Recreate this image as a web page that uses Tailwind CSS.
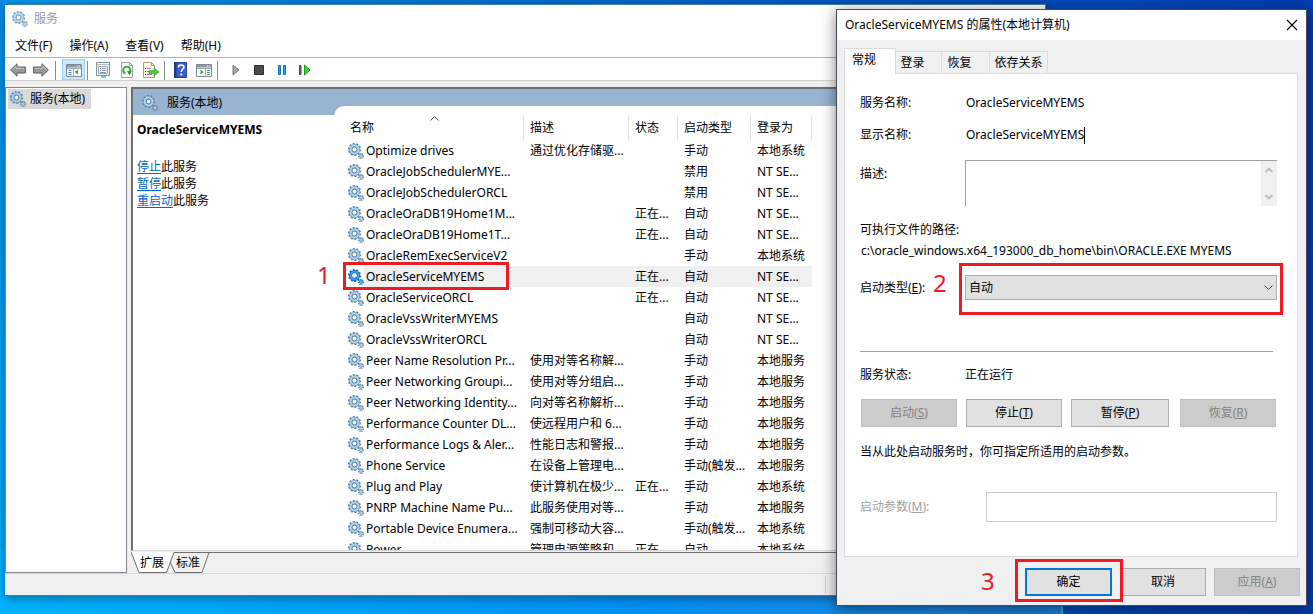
<!DOCTYPE html>
<html lang="zh-CN">
<head>
    <meta charset="UTF-8">
    <meta name="viewport" content="width=device-width, initial-scale=1.0">
    <title>服务</title>
    <script src="https://cdn.jsdelivr.net/npm/@tailwindcss/browser@4"></script>
</head>
<body class="relative h-screen overflow-hidden bg-linear-to-r from-[#0098ec] via-[#0560cc] via-55% to-[#043cb0] font-['Noto_Sans','Noto_Sans_CJK_SC',sans-serif] text-[12px] leading-5 text-black">

    <!-- Shared icons -->
    <svg class="hidden">
        <symbol id="gear" viewBox="0 0 16 16">
            <circle cx="6.5" cy="6.5" r="5.7" fill="none" stroke="#5d7f99" stroke-width="1.8" stroke-dasharray="1.9 1.6"/>
            <circle cx="6.5" cy="6.5" r="3.9" fill="none" stroke="#6795b8" stroke-width="3.2"/>
            <circle cx="6.5" cy="6.5" r="3.9" fill="none" stroke="#a9d3ec" stroke-width="2"/>
            <circle cx="6.5" cy="6.5" r="2.3" fill="#fff" stroke="#4f7896" stroke-width=".8"/>
            <circle cx="13" cy="13" r="2.3" fill="none" stroke="#5d7f99" stroke-width="1.4" stroke-dasharray="1.1 .7"/>
            <circle cx="13" cy="13" r="1.4" fill="#dcecf6" stroke="#7da3bf" stroke-width="1"/>
        </symbol>
        <symbol id="gear-selected" viewBox="0 0 16 16">
            <circle cx="6.5" cy="6.5" r="5.7" fill="none" stroke="#1b74bd" stroke-width="1.8" stroke-dasharray="1.9 1.6"/>
            <circle cx="6.5" cy="6.5" r="3.9" fill="none" stroke="#1674c4" stroke-width="3.2"/>
            <circle cx="6.5" cy="6.5" r="3.9" fill="none" stroke="#4aa3e4" stroke-width="1.4"/>
            <circle cx="6.5" cy="6.5" r="2.1" fill="#e6f3fc"/>
            <circle cx="13" cy="13" r="2.3" fill="none" stroke="#1b74bd" stroke-width="1.4" stroke-dasharray="1.1 .7"/>
            <circle cx="13" cy="13" r="1.4" fill="#a6d2f2" stroke="#2a80c6" stroke-width="1"/>
        </symbol>
    </svg>

    <!-- Wallpaper glow -->
    <div class="absolute inset-y-0 left-0 w-1.5 bg-linear-to-b from-[#0090e6] to-[#00aeff]"></div>
    <div class="absolute bottom-0 left-0 right-[250px] h-16 border-r-2 border-[#18b4e8] bg-linear-to-r from-[#00b2ff] via-[#0090f4] via-60% to-[#1c82dc]"></div>

    <!-- Services window -->
    <div class="absolute top-1 right-[267px] bottom-[18px] left-[5px] flex flex-col border border-l-0 border-[#3f7fa8] bg-[#f0f0f0] shadow-[0_2px_10px_rgba(0,0,0,0.4)]">
        <div class="flex h-[27px] items-center gap-1.5 bg-white pl-[7px] text-[#999999]">
            <svg class="size-4 opacity-80"><use href="#gear"/></svg>
            <h1>服务</h1>
        </div>
        <nav class="flex h-[26px] items-center gap-[17px] border-b border-[#b0b0b0] bg-white pt-0.5 pl-2.5">
            <button>文件(F)</button>
            <button>操作(A)</button>
            <button>查看(V)</button>
            <button>帮助(H)</button>
        </nav>

        <!-- Toolbar -->
        <div class="flex h-[23px] items-end border-b border-[#d0d0d0] bg-white pl-px">
            <button class="grid h-[21px] w-[23px] place-items-center" aria-label="后退">
                <svg class="size-4" viewBox="0 0 16 16"><path d="M.6 8 7 1.8V5h8.400v6H7v3.200z" fill="#989898" stroke="#5e5e5e"/><path d="M2.500 7.600 6 4.200V6.300h8.200" fill="none" stroke="#c6c6c6"/></svg>
            </button>
            <button class="grid h-[21px] w-[23px] place-items-center" aria-label="前进">
                <svg class="size-4" viewBox="0 0 16 16"><path d="M15.400 8 9 1.800V5H.600v6H9v3.200z" fill="#989898" stroke="#5e5e5e"/><path d="M13.500 7.600 10 4.200V6.300H1.800" fill="none" stroke="#c6c6c6"/></svg>
            </button>
            <span class="mr-1.5 ml-[3px] h-[19px] w-px bg-[#8c8c8c]"></span>
            <button class="grid h-[21px] w-[23px] place-items-center border border-[#99d1ff] bg-[#cce8ff]" aria-label="显示/隐藏控制台树">
                <svg class="size-4" viewBox="0 0 16 16"><path d="M.5 2.500h15v12H.500z" fill="#fff" stroke="#808b95"/><path d="M1 3h14v2.500H1z" fill="#8d98a3"/><path d="M11 4h1M13 4h1" stroke="#fff"/><path d="M1 6.500h14M7.500 6v8" stroke="#9aa5af"/><path d="M2.500 8.500h3M2.500 10.500h3M2.500 12.500h3" stroke="#4d82bd"/><path d="M12 7.500v5L8.900 10z" fill="#2fa52f"/></svg>
            </button>
            <span class="mr-[3px] ml-[2px] h-[19px] w-px bg-[#8c8c8c]"></span>
            <div class="flex gap-px">
                <button class="grid h-[21px] w-[23px] place-items-center" aria-label="属性">
                    <svg class="size-4" viewBox="0 0 16 16"><path d="M1.500.5h13v13h-13z" fill="#f4f6f8" stroke="#858e96"/><path d="M2 2.500h12" stroke="#b4bec6"/><path d="M3.500 4.500h9v7h-9z" fill="#fff" stroke="#9aa4ac"/><path d="M5 6.500h1M5 8.500h1" stroke="#3c86c8"/><path d="M7 6.500h4.500M7 8.500h4.500M5 10.500h6" stroke="#8e98a0"/><path d="M6 15h5" stroke="#46b5e8" stroke-width="1.500"/></svg>
                </button>
                <button class="grid h-[21px] w-[23px] place-items-center" aria-label="刷新">
                    <svg class="size-4" viewBox="0 0 16 16"><path d="M2.500.5h8l3 3v12h-11z" fill="#fbfbfb" stroke="#a3a3a3"/><path d="M10.500.5v3h3" fill="none" stroke="#a3a3a3"/><path d="M6.200 11.500A3.600 3.600 0 1 1 11 10" fill="none" stroke="#35ad35" stroke-width="2"/><path d="m8 9 5 .3-2.600 4z" fill="#239a23"/></svg>
                </button>
                <button class="grid h-[21px] w-[23px] place-items-center" aria-label="导出列表">
                    <svg class="size-4" viewBox="0 0 16 16"><path d="M.5.500h8l3 3v12H.500z" fill="#fff8dc" stroke="#a59f86"/><path d="M8.500.5v3h3" fill="none" stroke="#a59f86"/><path d="M2 6.500h1M2 9.500h1M2 12.500h1" stroke="#333"/><path d="M4 6.500h4M4 9.500h3M4 12.500h5" stroke="#7c8bab"/><path d="M6 8.500h5V6l5 4-5 4v-2.500H6z" fill="#55c63c" stroke="#3a9c27" stroke-width=".6"/></svg>
                </button>
            </div>
            <span class="mr-[3px] ml-[2px] h-[19px] w-px bg-[#8c8c8c]"></span>
            <div class="flex gap-px">
                <button class="grid h-[21px] w-[23px] place-items-center" aria-label="帮助">
                    <svg class="size-4" viewBox="0 0 16 16"><path d="M2.500.5h12v15h-12z" fill="#3a5ec8" stroke="#27419c"/><path d="M2 0h2.500v16H2z" fill="#203a8c"/><path d="M6.500 5.500C6.500 2.200 12.100 2.300 12 5.200 11.900 7.300 9.300 7.200 9.300 10" fill="none" stroke="#fff" stroke-width="1.600"/><circle cx="9.300" cy="12.500" r="1.100" fill="#fff"/></svg>
                </button>
                <button class="grid h-[21px] w-[23px] place-items-center" aria-label="显示/隐藏操作窗格">
                    <svg class="size-4" viewBox="0 0 16 16"><path d="M.5 2.500h15v12H.500z" fill="#fff" stroke="#808b95"/><path d="M1 3h14v2.500H1z" fill="#8d98a3"/><path d="M11 4h1M13 4h1" stroke="#fff"/><path d="M1 6.500h14M9.500 6v8" stroke="#9aa5af"/><path d="M11 8.500h3M11 10.500h3M11 12.500h3" stroke="#4d82bd"/><path d="M4.500 7.500v5L7.600 10z" fill="#2fa52f"/></svg>
                </button>
            </div>
            <span class="mr-1.5 ml-[2px] h-[19px] w-px bg-[#8c8c8c]"></span>
            <button class="grid h-[21px] w-[23px] place-items-center" aria-label="启动服务">
                <svg class="size-4" viewBox="0 0 16 16"><path d="M5 3v10l6-5z" fill="#a9a9a9" stroke="#757575"/></svg>
            </button>
            <button class="grid h-[21px] w-[23px] place-items-center" aria-label="停止服务">
                <svg class="size-4" viewBox="0 0 16 16"><path d="M3.500 3.500h9v9h-9z" fill="#4a4a4a" stroke="#303030"/></svg>
            </button>
            <button class="grid h-[21px] w-[23px] place-items-center" aria-label="暂停服务">
                <svg class="size-4" viewBox="0 0 16 16"><path d="M4.500 3.500h2v9h-2zM9.500 3.500h2v9h-2z" fill="#2ba1e4" stroke="#0f77bd"/></svg>
            </button>
            <button class="grid h-[21px] w-[23px] place-items-center" aria-label="重启动服务">
                <svg class="size-4" viewBox="0 0 16 16"><path d="M2.500 3.500h1.500v9H2.500z" fill="#777" stroke="#444"/><path d="M7.500 3v10l5.500-5z" fill="#3fd03f" stroke="#199c19"/></svg>
            </button>
        </div>

        <div class="mt-1.5 flex min-h-0 flex-1 gap-1">
            <!-- Console tree -->
            <aside class="w-[122px] shrink-0 border border-[#828790] bg-white p-0.5 pt-px">
                <div class="flex h-5 w-[83px] items-center gap-1 bg-[#d9d9d9] pl-0.5">
                    <svg class="size-4"><use href="#gear"/></svg>
                    <span>服务(本地)</span>
                </div>
            </aside>

            <main class="flex min-w-0 flex-1 flex-col">
                <div class="flex min-h-0 flex-1 overflow-hidden border-t-2 border-b border-l-2 border-t-[#6f6f6f] border-b-[#d8d8d8] border-l-[#6f6f6f] bg-white">
                    <section class="w-[201px] shrink-0">
                        <header class="flex h-[26px] items-center gap-[9px] bg-[#99b4d1] pt-0.5 pl-[9px]">
                            <svg class="size-4"><use href="#gear"/></svg>
                            <span>服务(本地)</span>
                        </header>
                        <div class="px-1 pt-[5px]">
                            <h2 class="font-bold">OracleServiceMYEMS</h2>
                            <div class="mt-[18px] leading-[17px]">
                                <p><a href="#stop" class="text-[#0066cc] underline underline-offset-2">停止</a>此服务</p>
                                <p><a href="#pause" class="text-[#0066cc] underline underline-offset-2">暂停</a>此服务</p>
                                <p><a href="#restart" class="text-[#0066cc] underline underline-offset-2">重启动</a>此服务</p>
                            </div>
                        </div>
                    </section>
                    <section class="flex-1 bg-[#99b4d1] pt-[17px]">
                        <div class="rounded-tl-[10px] bg-white pt-2.5 pl-2.5">
                            <table class="w-[468px] table-fixed border-collapse text-left whitespace-nowrap">
                                <thead>
                                    <tr class="h-6">
                                        <th class="relative w-[180px] p-0 pl-1.5 font-normal">名称
                                            <svg class="absolute top-0 left-[86px] h-[5px] w-[9px]" viewBox="0 0 9 5"><path d="m.5 4.500 4-4 4 4" fill="none" stroke="#555"/></svg>
                                            <span class="absolute inset-y-0 right-0 w-px bg-[#e0e0e0]"></span>
                                        </th>
                                        <th class="relative w-[105px] p-0 pl-1.5 font-normal">描述<span class="absolute inset-y-0 right-0 w-px bg-[#e0e0e0]"></span></th>
                                        <th class="relative w-[49px] p-0 pl-1.5 font-normal">状态<span class="absolute inset-y-0 right-0 w-px bg-[#e0e0e0]"></span></th>
                                        <th class="relative w-[73px] p-0 pl-1.5 font-normal">启动类型<span class="absolute inset-y-0 right-0 w-px bg-[#e0e0e0]"></span></th>
                                        <th class="relative w-[61px] p-0 pl-1.5 font-normal">登录为<span class="absolute inset-y-0 right-0 w-px bg-[#e0e0e0]"></span></th>
                                    </tr>
                                </thead>
                                <tbody id="services"></tbody>
                            </table>
                        </div>
                    </section>
                </div>

                <!-- View tabs -->
                <div class="mt-px h-[21px] border-t border-[#6f6f6f]">
                    <div class="relative flex h-5 items-center">
                        <svg class="absolute -top-px left-0 h-[21px] w-20" viewBox="0 0 80 21" fill="none">
                            <path d="M0 0h43l-7 20.500H8z" fill="#fff"/>
                            <path d="M0 0 8 20.500h27.500L43 .5M39 10l5 10.500h27L78 .5" stroke="#6f6f6f"/>
                        </svg>
                        <button class="relative ml-[7px] w-7">扩展</button>
                        <button class="relative ml-2 w-7">标准</button>
                    </div>
                </div>
            </main>
        </div>

        <!-- Status bar -->
        <footer class="flex h-[22px] border-t border-[#d7d7d7] pt-0.5 pb-px">
            <div class="w-[821px] border-r border-[#d0d0d0]"></div>
        </footer>
    </div>

    <!-- Properties dialog -->
    <div role="dialog" aria-labelledby="dialogTitle" class="absolute top-[9px] right-[6px] flex w-[471px] flex-col border border-[#454c55] bg-[#f0f0f0] shadow-[0_3px_14px_rgba(0,0,0,0.5)]">
        <div class="flex h-[30px] items-center justify-between bg-white pr-2 pl-2">
            <h2 id="dialogTitle">OracleServiceMYEMS 的属性(本地计算机)</h2>
            <button aria-label="关闭"><svg class="size-3" viewBox="0 0 12 12"><path d="m1 1 10 10M11 1 1 11" stroke="#000" stroke-width="1.100"/></svg></button>
        </div>

        <div class="pt-2 pr-2 pl-[7px]">
            <div role="tablist" class="relative flex items-end">
                <button role="tab" aria-selected="true" class="-mb-px h-[26px] w-[52px] border border-b-0 border-[#dcdcdc] bg-white pr-3 pb-1">常规</button>
                <button role="tab" class="h-[22px] w-[46px] border-t border-r border-[#dcdcdc] pr-3">登录</button>
                <button role="tab" class="h-[22px] w-12 border-t border-r border-[#dcdcdc] pr-3">恢复</button>
                <button role="tab" class="h-[22px] w-[58px] border-t border-r border-[#dcdcdc]">依存关系</button>
            </div>

            <form class="border border-[#dcdcdc] bg-white pt-[19px] pr-5 pb-[34px] pl-[15px]">
                <div class="flex">
                    <span class="w-[106px]">服务名称:</span>
                    <span>OracleServiceMYEMS</span>
                </div>
                <div class="mt-3 flex">
                    <label for="displayName" class="w-[106px]">显示名称:</label>
                    <input id="displayName" value="OracleServiceMYEMS" class="field-sizing-content h-5 outline-none">
                    <span class="h-[17px] w-px self-center bg-black"></span>
                </div>
                <div class="mt-[15px] flex">
                    <label for="description" class="w-[105px] pt-1">描述:</label>
                    <div class="flex h-[46px] flex-1 border-t border-l border-[#a0a0a0]">
                        <textarea id="description" class="min-w-0 flex-1 resize-none outline-none"></textarea>
                        <div class="flex w-4 flex-col items-center justify-between bg-[#f0f0f0] py-1.5">
                            <svg class="h-1.5 w-2" viewBox="0 0 8 6"><path d="m.5 5 3.500-3.500L7.500 5" fill="none" stroke="#bcbcbc" stroke-width="1.800"/></svg>
                            <svg class="h-1.5 w-2" viewBox="0 0 8 6"><path d="m.5 1 3.500 3.500L7.500 1" fill="none" stroke="#bcbcbc" stroke-width="1.800"/></svg>
                        </div>
                    </div>
                </div>
                <p class="mt-3.5">可执行文件的路径:</p>
                <p class="mt-px pl-px">c:\oracle_windows.x64_193000_db_home\bin\ORACLE.EXE MYEMS</p>
                <div class="mt-3.5 flex items-center">
                    <label for="startupType" class="w-[105px]">启动类型(<u>E</u>):</label>
                    <div class="relative flex-1">
                        <select id="startupType" class="block h-[25px] w-full appearance-none border border-[#adadad] bg-[#e1e1e1] pl-[3px] text-[12px]">
                            <option>自动</option>
                            <option>手动</option>
                            <option>禁用</option>
                        </select>
                        <svg class="absolute top-2.5 right-1 h-[5px] w-[9px]" viewBox="0 0 9 5"><path d="m.5.500 4 4 4-4" fill="none" stroke="#444"/></svg>
                        <div class="pointer-events-none absolute -inset-x-1.5 -top-3 -bottom-[15px] border-3 border-[#ed1c24]"></div>
                        <span class="absolute -top-2 -left-8 text-2xl text-[#ed1c24]">2</span>
                    </div>
                </div>
                <hr class="mt-[51px] mr-1 border-[#a0a0a0]">
                <div class="mt-[13px] flex">
                    <span class="w-[105px]">服务状态:</span>
                    <span>正在运行</span>
                </div>
                <div class="mt-3.5 flex gap-[9px] pl-px">
                    <button type="button" disabled class="h-7 w-24 border border-[#bfbfbf] bg-[#cccccc] text-[#838383]">启动(<u>S</u>)</button>
                    <button type="button" class="h-7 w-24 border border-[#adadad] bg-[#e1e1e1]">停止(<u>T</u>)</button>
                    <button type="button" class="h-7 w-[98px] border border-[#adadad] bg-[#e1e1e1]">暂停(<u>P</u>)</button>
                    <button type="button" disabled class="ml-0.5 h-7 w-24 border border-[#bfbfbf] bg-[#cccccc] text-[#838383]">恢复(<u>R</u>)</button>
                </div>
                <p class="mt-[15px]">当从此处启动服务时，你可指定所适用的启动参数。</p>
                <div class="mt-[30px] flex items-center">
                    <label for="startParams" class="w-[126px] text-[#a0a0a0]">启动参数(<u>M</u>):</label>
                    <input id="startParams" disabled class="h-[30px] min-w-0 flex-1 border border-[#cccccc] bg-white px-1">
                </div>
            </form>
        </div>

        <div class="flex justify-end gap-2 pt-[11px] pr-1.5 pb-[9px]">
            <div class="relative">
                <button class="block h-7 w-[87px] border-2 border-[#0078d7] bg-[#e1e1e1]">确定</button>
                <div class="pointer-events-none absolute -top-[9px] -right-[11px] -bottom-1.5 -left-2.5 z-10 border-3 border-[#ed1c24]"></div>
                <span class="absolute top-[3px] -left-11 text-2xl leading-5 text-[#ed1c24]">3</span>
            </div>
            <button class="h-7 w-[86px] border border-[#adadad] bg-[#e1e1e1]">取消</button>
            <button disabled class="h-7 w-[86px] border border-[#bfbfbf] bg-[#cccccc] text-[#838383]">应用(<u>A</u>)</button>
        </div>
    </div>

    <script>
        // name, description, status, startup type, log on as
        const services = [
            ['Optimize drives', '通过优化存储驱...', '', '手动', '本地系统'],
            ['OracleJobSchedulerMYE...', '', '', '禁用', 'NT SE...'],
            ['OracleJobSchedulerORCL', '', '', '禁用', 'NT SE...'],
            ['OracleOraDB19Home1M...', '', '正在...', '自动', 'NT SE...'],
            ['OracleOraDB19Home1T...', '', '正在...', '自动', 'NT SE...'],
            ['OracleRemExecServiceV2', '', '', '手动', '本地系统'],
            ['OracleServiceMYEMS', '', '正在...', '自动', 'NT SE...'],
            ['OracleServiceORCL', '', '正在...', '自动', 'NT SE...'],
            ['OracleVssWriterMYEMS', '', '', '自动', 'NT SE...'],
            ['OracleVssWriterORCL', '', '', '自动', 'NT SE...'],
            ['Peer Name Resolution Pr...', '使用对等名称解...', '', '手动', '本地服务'],
            ['Peer Networking Groupi...', '使用对等分组启...', '', '手动', '本地服务'],
            ['Peer Networking Identity...', '向对等名称解析...', '', '手动', '本地服务'],
            ['Performance Counter DL...', '使远程用户和 6...', '', '手动', '本地服务'],
            ['Performance Logs &amp; Aler...', '性能日志和警报...', '', '手动', '本地服务'],
            ['Phone Service', '在设备上管理电...', '', '手动(触发...', '本地服务'],
            ['Plug and Play', '使计算机在极少...', '正在...', '手动', '本地系统'],
            ['PNRP Machine Name Pu...', '此服务使用对等...', '', '手动', '本地服务'],
            ['Portable Device Enumera...', '强制可移动大容...', '', '手动(触发...', '本地系统'],
            ['Power', '管理电源策略和...', '正在...', '自动', '本地系统']
        ];
        const selected = 'OracleServiceMYEMS';

        document.getElementById('services').innerHTML = services.map(([name, ...cells]) => {
            const on = name === selected;
            const bg = on ? 'bg-[#f0f0f0]' : '';
            const mark = on ? `
                <div class="pointer-events-none absolute -top-1 -bottom-[3px] -left-px w-[166px] border-3 border-[#ed1c24]"></div>
                <span class="absolute -top-px -left-[27px] text-2xl leading-5 text-[#ed1c24]">1</span>` : '';
            return `<tr class="h-[21px]">
                <td class="relative p-0 pl-1">
                    <div class="flex h-[21px] items-center">
                        <svg class="size-4 shrink-0"><use href="${on ? '#gear-selected' : '#gear'}"/></svg>
                        <span class="flex h-[21px] flex-1 items-center pl-0.5 ${bg}">${name}</span>
                    </div>${mark}
                </td>
                ${cells.map(text => `<td class="p-0 pl-1.5 ${bg}">${text}</td>`).join('')}
            </tr>`;
        }).join('');
    </script>
</body>
</html>
